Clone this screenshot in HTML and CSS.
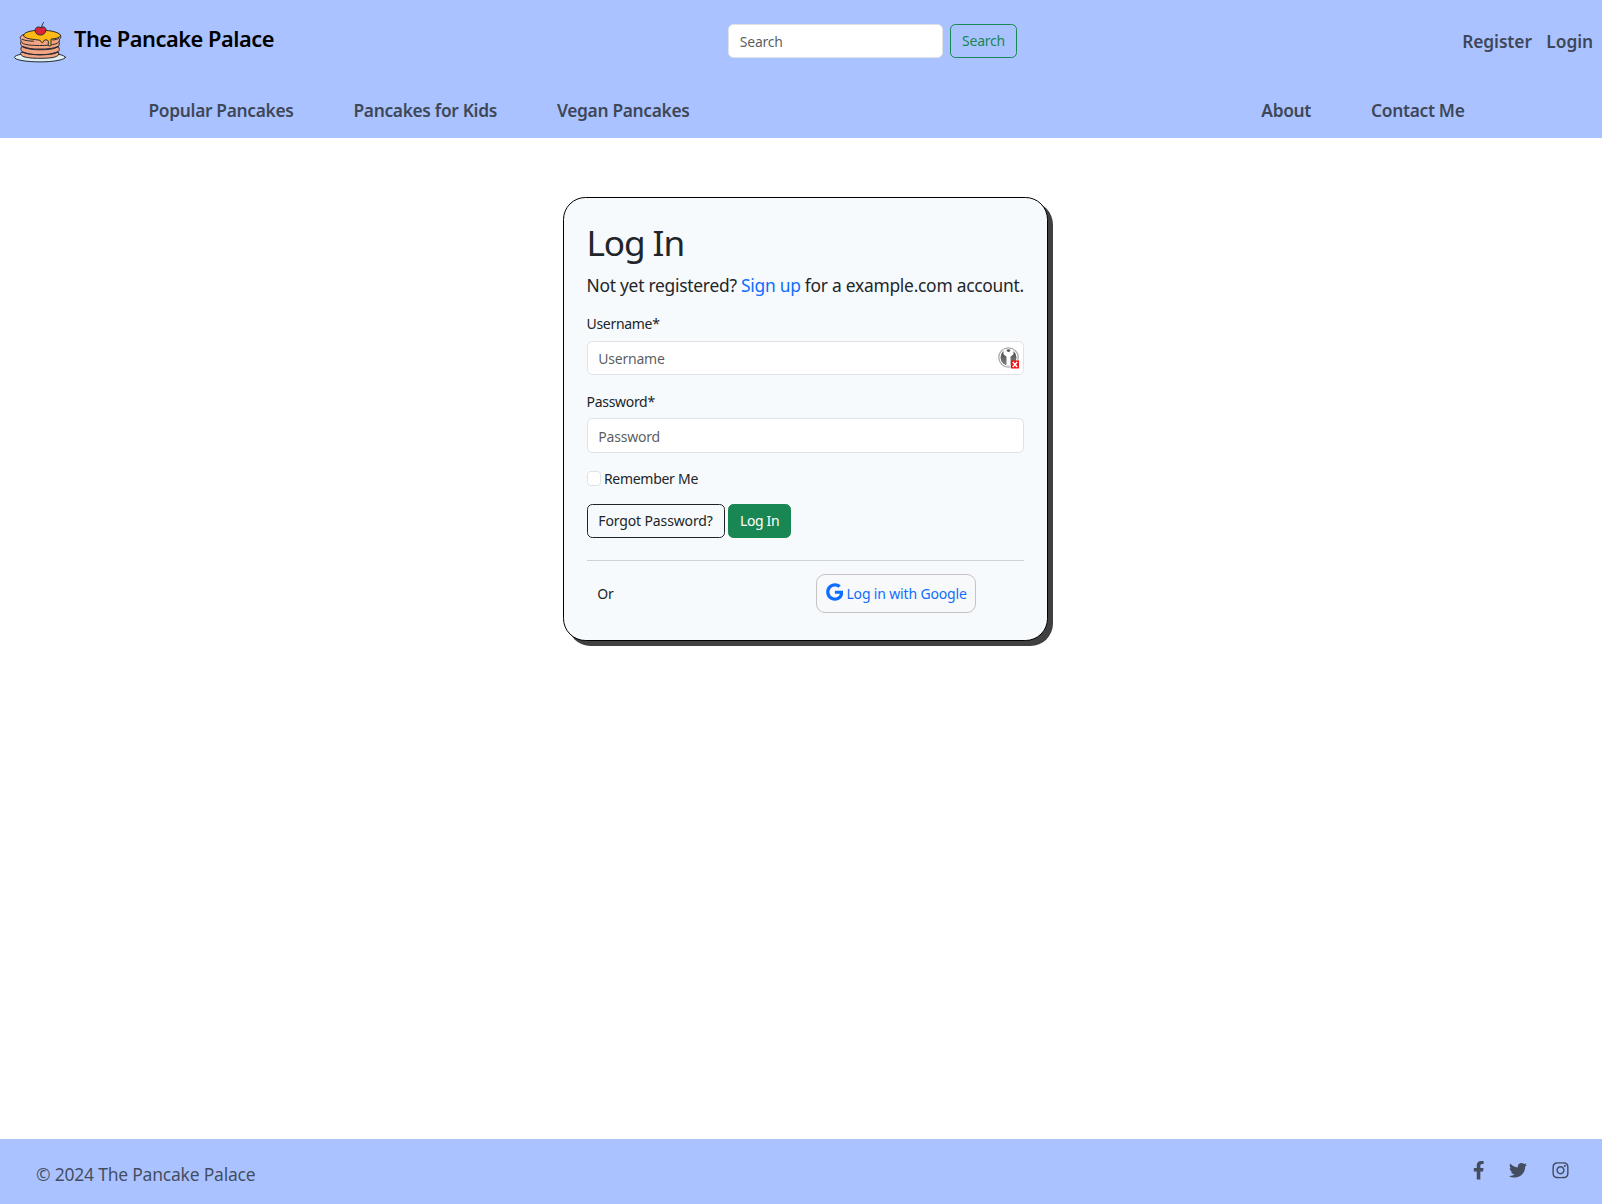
FILE: index.html
```html
<!DOCTYPE html>
<html lang="en">
<head>
<meta charset="utf-8">
<title>The Pancake Palace</title>
<link rel="stylesheet" href="styles.css">
</head>
<body>
<header class="header">
  <div class="topbar">
    <a class="brand" href="#">
      <svg class="logo" viewBox="0 0 54 42" aria-hidden="true">
        <g stroke="#262b33" stroke-width="1" stroke-linejoin="round" stroke-linecap="round">
          <ellipse cx="27" cy="35.300" rx="25.500" ry="4.600" fill="#dfeeee"/>
          <path d="M8 30.500c-1.700 2.800 1 5.800 19 5.800s20-3 18.500-6z" fill="#f3a583"/>
          <path d="M8.500 25c-2.300 3.200 0 7.800 19 7.800s20.500-4.500 18-7.800z" fill="#f3a583"/>
          <path d="M8.500 19c-3 3.400-.5 8.800 19 8.800s20.500-5 18-8.800z" fill="#f3a583"/>
          <path d="M10.500 12.500c-4 1.500-3.700 3.500-2.500 5-1 4 4 6 18.500 6s20.500-2 20-6c2-2.500 2-4.500-1.500-5.500z" fill="#f3a583"/>
          <path d="M9.500 17.500c3 1.200 7 1.600 11 1.700M40 18c2.500-.3 4-.7 5.500-1.300" fill="none"/>
          <path d="M9.500 24.500c8 3.500 27 3.500 35.500 0M9.500 30c8 3.500 27 3.500 35 0" fill="none" stroke-width="1.300"/>
          <path d="M10.500 13.500c-.7-7 33-7 37-.4 0 2.400-4 3.400-9.500 4v5.700c0 1.800-2.700 1.800-2.700 0v-3.600c0-1.900-4.800-1.700-4.800 0 0 2-2.700 1.700-2.700-.2 0-2-16.800-.7-17.300-5.500z" fill="#ffb914"/>
          <path d="M27.500 5.500c4-1.700 6 .4 5.300 3.300-.7 3-3.400 4.500-5.300 4.200-3.300.2-5.500-2.300-5.400-4.700.2-3 3-4.200 5.400-2.800z" fill="#dc2338"/>
          <path d="M28.600 5.500c.4-2 .7-3.500 1.900-5" fill="none"/>
        </g>
      </svg>
      <span class="brand-name">The Pancake Palace</span>
    </a>
    <form class="search">
      <input class="input search-input" type="search" placeholder="Search">
      <button class="btn btn-search" type="button">Search</button>
    </form>
    <nav class="account">
      <a class="nav-link" href="#">Register</a>
      <a class="nav-link" href="#">Login</a>
    </nav>
  </div>
  <nav class="menu">
    <div class="menu-group">
      <a class="nav-link" href="#">Popular Pancakes</a>
      <a class="nav-link" href="#">Pancakes for Kids</a>
      <a class="nav-link" href="#">Vegan Pancakes</a>
    </div>
    <div class="menu-group">
      <a class="nav-link" href="#">About</a>
      <a class="nav-link" href="#">Contact Me</a>
    </div>
  </nav>
</header>

<main class="main">
  <section class="card">
    <h1 class="title">Log In</h1>
    <p class="lead">Not yet registered? <a class="link" href="#">Sign up</a> for a example.com account.</p>
    <form>
      <div class="field">
        <label class="label" for="username">Username*</label>
        <div class="input-wrap">
          <input class="input" id="username" type="text" placeholder="Username">
          <svg class="key-icon" viewBox="0 0 22 22" aria-hidden="true">
            <defs><linearGradient id="steel" x1="0" y1="0" x2="0" y2="1"><stop offset="0" stop-color="#444"/><stop offset="1" stop-color="#858585"/></linearGradient></defs>
            <circle cx="10.500" cy="10.500" r="9.700" fill="#fff" stroke="#aaa" stroke-width="1.300"/>
            <circle cx="10.500" cy="10.500" r="8" fill="url(#steel)"/>
            <path d="M5.500 2.500 8.700 2v2.200h3.600V2l3.200.7v4.500l-3 2.600v8.700h-4V9.800l-3-2.600z" fill="#fff"/>
            <circle cx="10.500" cy="3.700" r="1.200" fill="#555"/>
            <path d="M13 13.500h8v8h-8z" fill="#f50f0f"/>
            <path d="m14.800 15 4.400 5m0-5-4.400 5" stroke="#fff" stroke-width="1.500"/>
          </svg>
        </div>
      </div>
      <div class="field">
        <label class="label" for="password">Password*</label>
        <input class="input" id="password" type="password" placeholder="Password">
      </div>
      <label class="remember"><input class="check" type="checkbox"><span class="remember-text">Remember Me</span></label>
      <div class="actions">
        <a class="btn btn-outline" href="#">Forgot Password?</a>
        <button class="btn btn-login" type="button">Log In</button>
      </div>
    </form>
    <hr class="rule">
    <div class="social">
      <span class="or">Or</span>
      <a class="google" href="#">
        <svg class="google-icon" viewBox="0 0 488 512" aria-hidden="true"><path fill="currentColor" d="M488 261.800C488 403.300 391.100 504 248 504 110.800 504 0 393.200 0 256S110.800 8 248 8c66.800 0 123 24.500 166.300 64.900l-67.500 64.900C258.500 52.600 94.300 116.600 94.300 256c0 86.500 69.100 156.600 153.700 156.600 98.200 0 135-70.400 140.800-106.900H248v-85.300h236.100c2.300 12.700 3.900 24.900 3.900 41.400z"/></svg>
        <span>Log in with Google</span>
      </a>
    </div>
  </section>
</main>

<footer class="footer">
  <p class="copyright">© 2024 The Pancake Palace</p>
  <div class="icons">
    <svg class="icon-fb" viewBox="0 0 320 512" aria-label="Facebook"><path fill="currentColor" d="M279.140 288l14.220-92.660h-88.910v-60.130c0-25.350 12.420-50.060 52.240-50.060h40.420V6.260S260.430 0 225.360 0c-73.220 0-121.080 44.380-121.080 124.720v70.620H22.890V288h81.390v224h100.170V288z"/></svg>
    <svg class="icon-tw" viewBox="0 0 512 512" aria-label="Twitter"><path fill="currentColor" d="M459.370 151.716c.325 4.548.325 9.097.325 13.645 0 138.720-105.583 298.558-298.558 298.558-59.452 0-114.680-17.219-161.137-47.106 8.447.974 16.568 1.299 25.340 1.299 49.055 0 94.213-16.568 130.274-44.832-46.132-.975-84.792-31.188-98.112-72.772 6.498.974 12.995 1.624 19.818 1.624 9.421 0 18.843-1.300 27.614-3.573-48.081-9.747-84.143-51.980-84.143-102.985v-1.299c13.969 7.797 30.214 12.670 47.431 13.319-28.264-18.843-46.781-51.005-46.781-87.391 0-19.492 5.197-37.360 14.294-52.954 51.655 63.675 129.300 105.258 216.365 109.807-1.624-7.797-2.599-15.918-2.599-24.040 0-57.828 46.782-104.934 104.934-104.934 30.213 0 57.502 12.670 76.670 33.137 23.715-4.548 46.456-13.320 66.599-25.340-7.798 24.366-24.366 44.833-46.132 57.827 21.117-2.273 41.584-8.122 60.426-16.243-14.292 20.791-32.161 39.308-52.628 54.253z"/></svg>
    <svg class="icon-ig" viewBox="0 0 448 512" aria-label="Instagram"><path fill="currentColor" d="M224.100 141c-63.600 0-114.900 51.300-114.900 114.900s51.300 114.900 114.900 114.900S339 319.500 339 255.900 287.700 141 224.100 141zm0 189.600c-41.100 0-74.700-33.500-74.700-74.700s33.500-74.700 74.700-74.700 74.700 33.500 74.700 74.700-33.600 74.700-74.700 74.700zm146.400-194.300c0 14.900-12 26.800-26.800 26.800-14.900 0-26.800-12-26.800-26.800s12-26.800 26.800-26.800 26.800 12 26.800 26.800zm76.100 27.200c-1.700-35.900-9.900-67.700-36.200-93.900-26.200-26.200-58-34.400-93.900-36.200-37-2.100-147.900-2.100-184.900 0-35.800 1.700-67.600 9.900-93.900 36.100s-34.400 58-36.200 93.900c-2.100 37-2.100 147.900 0 184.900 1.700 35.900 9.900 67.700 36.200 93.900s58 34.400 93.900 36.200c37 2.100 147.900 2.100 184.900 0 35.900-1.700 67.700-9.900 93.900-36.200 26.200-26.200 34.400-58 36.200-93.900 2.100-37 2.100-147.800 0-184.800zM398.800 388c-7.800 19.600-22.900 34.700-42.600 42.600-29.500 11.700-99.500 9-132.100 9s-102.700 2.600-132.100-9c-19.600-7.800-34.700-22.900-42.600-42.600-11.700-29.500-9-99.500-9-132.100s-2.600-102.700 9-132.100c7.800-19.600 22.900-34.700 42.600-42.600 29.500-11.700 99.500-9 132.100-9s102.700-2.600 132.100 9c19.600 7.800 34.700 22.900 42.600 42.600 11.700 29.500 9 99.500 9 132.100s2.700 102.700-9 132.100z"/></svg>
  </div>
</footer>
</body>
</html>
```
FILE: styles.css
```css
*, *::before, *::after { box-sizing: border-box; }
body {
  margin: 0;
  min-height: 100vh;
  display: flex;
  flex-direction: column;
  font: 400 14px/21.6px "Noto Sans", "Liberation Sans", sans-serif;
  letter-spacing: -.22px;
  color: #212529;
  background: #fff;
}
a { text-decoration: none; }
input, button { font: inherit; letter-spacing: inherit; }

.header { height: 138px; background: #aac2ff; }
.topbar {
  display: grid;
  grid-template-columns: 728px 1fr auto;
  align-items: center;
  height: 82px;
  padding-right: 9px;
}
.brand { display: flex; padding-left: 13px; color: #000; }
.logo { width: 54px; height: 42px; margin-top: 4px; }
.brand-name { margin: 3.5px 0 0 7px; font-size: 21.8px; font-weight: 600; line-height: 34px; letter-spacing: -.47px; }
.search { display: flex; gap: 7px; }
.account { display: flex; gap: 14.5px; }
.account .nav-link { letter-spacing: -.1px; }
.nav-link { font-size: 17.4px; font-weight: 600; line-height: 27px; letter-spacing: -.34px; color: rgba(33, 37, 41, .8); white-space: nowrap; }
.menu { display: flex; justify-content: space-between; padding: 15px 137.5px 0 148.5px; }
.menu-group { display: flex; gap: 60px; }

.input {
  display: block;
  width: 100%;
  height: 34.4px;
  padding: 6px 10.8px 4.8px;
  border: 1px solid #dee2e6;
  border-radius: 5.4px;
  background: #fff;
  color: #212529;
  outline: 0;
}
.input::placeholder { color: rgba(33, 37, 41, .75); opacity: 1; }
.search-input { width: 215px; }
.btn {
  display: flex;
  align-items: center;
  justify-content: center;
  height: 34.4px;
  padding: 0;
  border: 1px solid;
  border-radius: 5.4px;
  background: none;
  white-space: nowrap;
}
.btn-search { width: 67px; color: #198754; }

.main { flex: 1; padding: 59px 0 0 563px; }
.card {
  width: 485px;
  height: 444px;
  padding: 23px 23.5px 22px 22.5px;
  border: 1px solid #000;
  border-radius: 22.5px;
  background: #f6fafd;
  box-shadow: 5px 5px 0 #404040;
}
.title { margin: 0 0 7.2px; font-size: 35.2px; font-weight: 400; line-height: 43.2px; letter-spacing: -1.1px; }
.lead { margin: 0 0 13.8px; font-size: 17.4px; line-height: 28px; letter-spacing: -.26px; white-space: nowrap; }
.link { color: #0d6efd; }
.field { margin-bottom: 15.1px; }
.label { display: block; margin-bottom: 6.3px; letter-spacing: -.3px; }
.input-wrap { position: relative; }
.key-icon { position: absolute; right: 4px; top: 6px; width: 22px; height: 22px; }
.remember { display: flex; gap: 3px; height: 21.6px; margin-bottom: 14.4px; }
.remember-text { padding-top: .5px; letter-spacing: -.28px; }
.check {
  appearance: none;
  width: 14.4px;
  height: 14.4px;
  margin: 3.3px 0 0;
  border: 1px solid #dee2e6;
  border-radius: 3.6px;
  background: #fff;
}
.actions { display: flex; gap: 3.6px; }
.btn-outline { width: 138px; color: #212529; letter-spacing: -.13px; }
.btn-login { width: 63px; color: #fff; background: #198754; border-color: #198754; letter-spacing: -.35px; }
.rule { margin: 21.9px 0 12.6px; border: 0; border-top: 1px solid #ced2d5; }
.social { display: flex; align-items: center; padding-left: 10.8px; }
.or { width: 219px; }
.google {
  display: flex;
  align-items: center;
  justify-content: center;
  gap: 3px;
  width: 160px;
  height: 39px;
  padding-top: 1px;
  border: 1px solid #c6c2c6;
  border-radius: 9px;
  background: #f8f9fa;
  color: #0d6efd;
  letter-spacing: -.16px;
  white-space: nowrap;
}
.google-icon { width: 17.5px; height: 18px; margin-top: -4px; }

.footer {
  display: flex;
  justify-content: space-between;
  height: 65px;
  padding: 22px 33.5px 0 36px;
  background: #aac2ff;
  color: rgba(33, 37, 41, .75);
}
.copyright { margin: 0; font-size: 17.5px; line-height: 27px; letter-spacing: -.22px; }
.icons { display: flex; gap: 24.7px; }
.icons svg { height: 18.5px; }
.icon-fb { width: 11.5px; }
.icon-tw { width: 18px; }
.icon-ig { width: 17px; }
```
